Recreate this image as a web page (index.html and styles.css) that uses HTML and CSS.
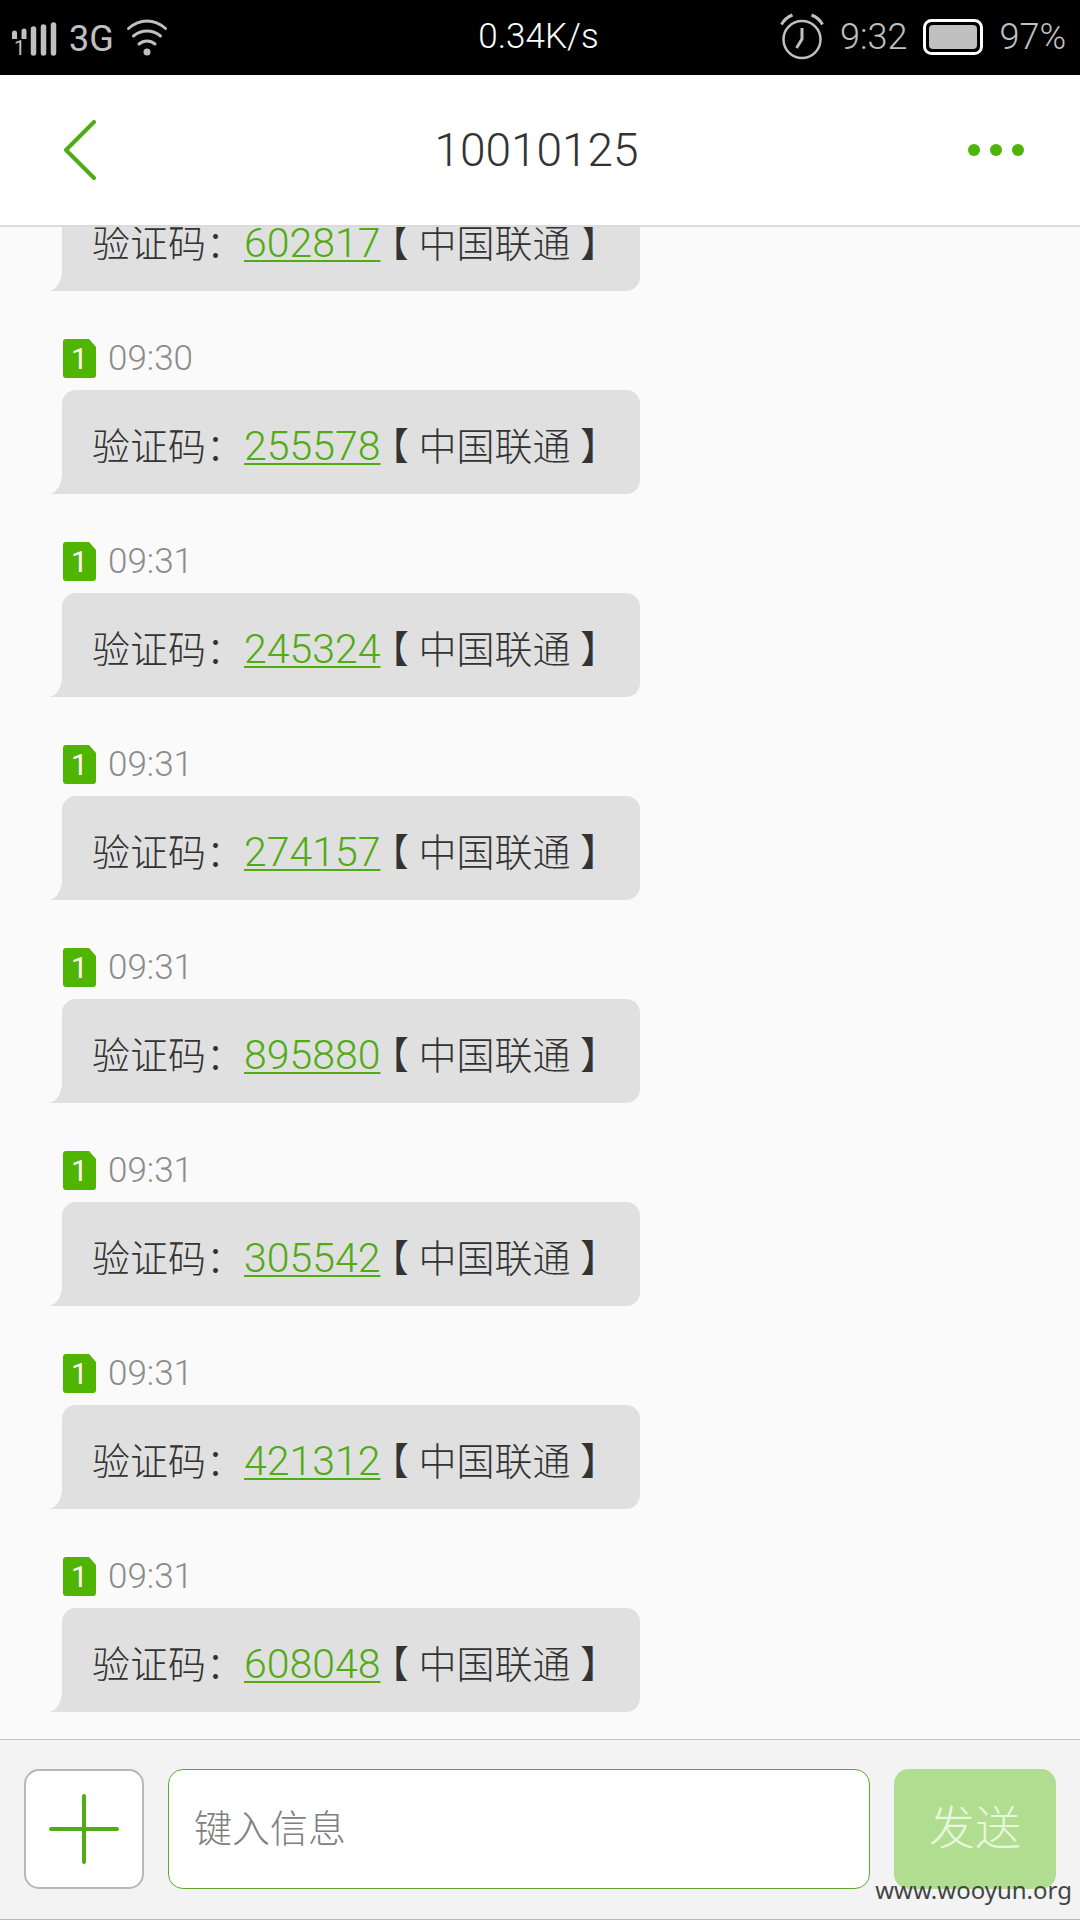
FILE: index.html
```html
<!DOCTYPE html>
<html lang="zh-CN">
<head>
<meta charset="utf-8">
<meta name="viewport" content="width=device-width, initial-scale=1">
<title>10010125</title>
<link rel="stylesheet" href="styles.css">
</head>
<body>
<div class="status">
  <div class="status-left">
    <svg class="signal" viewBox="0 0 46 44" aria-hidden="true">
      <path d="M1 22v-6q0-2.500 2.500-2.500T6 16v6zM10.500 22v-8q0-2.500 2.500-2.500t2.500 2.500v8z" fill="#c0c0c0"/>
      <path d="M22.500 12v24M32.500 10v26M42.500 8v28" stroke="#c0c0c0" stroke-width="5.500" stroke-linecap="round"/>
      <text x="3" y="38" class="signal-slot">1</text>
    </svg>
    <span class="network">3G</span>
    <svg class="wifi" viewBox="0 0 42 38" aria-hidden="true">
      <g fill="none" stroke="#c0c0c0" stroke-width="3" stroke-linecap="round">
        <path d="M2.500 10.500Q11 3 21 3t18.500 7.500M7.500 18Q13.500 13 21 13t13.500 5M13 26q3.500-3 8-3t8 3"/>
      </g>
      <circle cx="21" cy="34" r="3.500" fill="#c0c0c0"/>
    </svg>
  </div>
  <span class="speed">0.34K/s</span>
  <div class="status-right">
    <svg class="alarm" viewBox="0 0 44 48" aria-hidden="true">
      <g fill="none" stroke="#c0c0c0" stroke-width="2.500">
        <circle cx="22" cy="26.500" r="18.500"/>
        <path d="M1.500 11.500Q5 5 12.500 2M42.500 11.500Q39 5 31.500 2M22 15v11l-5.500 9" stroke-width="3"/>
      </g>
    </svg>
    <span>9:32</span>
    <svg class="battery" viewBox="0 0 60 36" aria-hidden="true">
      <rect x="1.500" y="1.500" width="57" height="33" rx="7" fill="none" stroke="#fff" stroke-width="3"/>
      <rect x="6" y="6" width="48" height="24" rx="4" fill="#c0c0c0"/>
    </svg>
    <span>97%</span>
  </div>
</div>

<header class="header">
  <button class="back-button" type="button" aria-label="返回">
    <svg class="back" viewBox="0 0 34 60" aria-hidden="true"><path d="M31 2L3 30l28 28" fill="none" stroke="#51ab14" stroke-width="4" stroke-linecap="round" stroke-linejoin="round"/></svg>
  </button>
  <h1 class="title">10010125</h1>
  <button class="more-button" type="button" aria-label="更多">
    <svg class="more" viewBox="0 0 56 12" aria-hidden="true"><g fill="#4fb505"><circle cx="6" cy="6" r="6"/><circle cx="28" cy="6" r="6"/><circle cx="50" cy="6" r="6"/></g></svg>
  </button>
</header>

<main class="thread">
  <ol class="messages">
    <li class="message">
      <p class="bubble">验证码：<a class="code" href="#">602817</a><span class="bracket">【</span>中国联通<span class="bracket">】</span></p>
    </li>
    <li class="message">
      <div class="meta"><span class="sim">1</span><time>09:30</time></div>
      <p class="bubble">验证码：<a class="code" href="#">255578</a><span class="bracket">【</span>中国联通<span class="bracket">】</span></p>
    </li>
    <li class="message">
      <div class="meta"><span class="sim">1</span><time>09:31</time></div>
      <p class="bubble">验证码：<a class="code" href="#">245324</a><span class="bracket">【</span>中国联通<span class="bracket">】</span></p>
    </li>
    <li class="message">
      <div class="meta"><span class="sim">1</span><time>09:31</time></div>
      <p class="bubble">验证码：<a class="code" href="#">274157</a><span class="bracket">【</span>中国联通<span class="bracket">】</span></p>
    </li>
    <li class="message">
      <div class="meta"><span class="sim">1</span><time>09:31</time></div>
      <p class="bubble">验证码：<a class="code" href="#">895880</a><span class="bracket">【</span>中国联通<span class="bracket">】</span></p>
    </li>
    <li class="message">
      <div class="meta"><span class="sim">1</span><time>09:31</time></div>
      <p class="bubble">验证码：<a class="code" href="#">305542</a><span class="bracket">【</span>中国联通<span class="bracket">】</span></p>
    </li>
    <li class="message">
      <div class="meta"><span class="sim">1</span><time>09:31</time></div>
      <p class="bubble">验证码：<a class="code" href="#">421312</a><span class="bracket">【</span>中国联通<span class="bracket">】</span></p>
    </li>
    <li class="message">
      <div class="meta"><span class="sim">1</span><time>09:31</time></div>
      <p class="bubble">验证码：<a class="code" href="#">608048</a><span class="bracket">【</span>中国联通<span class="bracket">】</span></p>
    </li>
  </ol>
</main>

<form class="compose">
  <button class="attach" type="button" aria-label="添加">
    <svg class="plus" viewBox="0 0 70 70" aria-hidden="true"><path d="M2 35h66M35 2v66" stroke="#51ab14" stroke-width="4" stroke-linecap="round"/></svg>
  </button>
  <input class="entry" type="text" placeholder="键入信息" aria-label="键入信息">
  <button class="send" type="button">发送</button>
</form>
<div class="watermark">www.wooyun.org</div>
</body>
</html>
```
FILE: styles.css
```css
* {
  box-sizing: border-box;
}

body {
  position: relative;
  display: flex;
  flex-direction: column;
  height: 100vh;
  margin: 0;
  overflow: hidden;
  background: #fafafa;
  color: #333;
  font-family: Roboto, "Noto Sans CJK SC", sans-serif;
  font-weight: 300;
}

svg {
  display: block;
  flex: none;
}

button {
  padding: 0;
  border: 0;
  background: none;
  font: inherit;
}

/* Status bar */
.status {
  display: grid;
  grid-template-columns: 1fr auto 1fr;
  align-items: center;
  flex: none;
  height: 75px;
  padding: 0 14px 1px 11px;
  background: #000;
  color: #c0c0c0;
  font-size: 36px;
  line-height: 40px;
}

.status-left,
.status-right {
  display: flex;
  align-items: center;
}

.status-right {
  justify-content: flex-end;
  gap: 16px;
}

.signal {
  width: 46px;
  height: 44px;
  margin-top: 4px;
}

.signal-slot {
  fill: #c0c0c0;
  font-size: 20px;
  font-weight: 400;
}

.network {
  margin: 4px 12px 0;
  font-weight: 400;
}

.wifi {
  width: 42px;
  height: 38px;
}

.speed {
  color: #fff;
  font-size: 35px;
}

.alarm {
  width: 44px;
  height: 48px;
}

.battery {
  width: 60px;
  height: 36px;
}

/* Title bar */
.header {
  display: flex;
  align-items: center;
  justify-content: space-between;
  flex: none;
  height: 152px;
  padding: 0 56px 0 63px;
  border-bottom: 2px solid #dadcdb;
  background: #fff;
}

.back-button {
  width: 42px;
}

.more-button {
  width: 56px;
}

.title {
  margin: 0;
  font-size: 46px;
  font-weight: 300;
  line-height: 56px;
}

.back {
  width: 34px;
  height: 60px;
}

.more {
  width: 56px;
  height: 12px;
}

/* Messages, newest at the bottom */
.thread {
  display: flex;
  flex-direction: column;
  justify-content: flex-end;
  flex: 1;
  min-height: 0;
  padding: 0 62px 27px;
  overflow: hidden;
}

.messages {
  display: flex;
  flex-direction: column;
  gap: 48px;
  margin: 0;
  padding: 0;
  list-style: none;
}

.message {
  display: flex;
  flex-direction: column;
  align-items: flex-start;
  gap: 12px;
}

.meta {
  display: flex;
  align-items: center;
  gap: 12px;
  height: 39px;
  padding-left: 1px;
  color: #8c8c8c;
  font-size: 35px;
  line-height: 39px;
}

.sim {
  width: 33px;
  border-radius: 3px;
  background: #4fb500;
  clip-path: polygon(0 0, 26px 0, 33px 8px, 33px 100%, 0 100%);
  color: #fff;
  font-size: 30px;
  font-weight: 400;
  text-align: center;
}

.bubble {
  position: relative;
  margin: 0;
  padding: 29px 32px 19px 30px;
  border-radius: 14px 14px 14px 0;
  background: #e0e0e0;
  font-size: 38px;
  line-height: 56px;
}

.bubble::before {
  content: "";
  position: absolute;
  bottom: 0;
  left: -14px;
  width: 14px;
  height: 20px;
  background: radial-gradient(ellipse 14px 20px at 0 0, transparent 98%, #e0e0e0 100%);
}

.code {
  color: #51ab14;
  font-size: 41px;
  line-height: 41px;
  text-decoration-thickness: 2px;
  text-underline-offset: 3px;
}

/* Half-width bracket centred in a full-width cell */
.bracket {
  display: inline-block;
  width: 38px;
  font-feature-settings: "halt";
  text-align: center;
}

/* Compose bar */
.compose {
  display: flex;
  gap: 24px;
  flex: none;
  padding: 29px 24px 30px;
  border-top: 1px solid #c4c4c4;
  border-bottom: 1px solid #b8b8b8;
  background: #f3f3f3;
}

.attach,
.entry,
.send {
  height: 120px;
  border-radius: 15px;
}

.attach {
  display: flex;
  align-items: center;
  justify-content: center;
  width: 120px;
  border: 2px solid #b8b8b8;
  background: #fff;
}

.plus {
  width: 70px;
  height: 70px;
}

.entry {
  flex: 1;
  min-width: 0;
  padding: 0 25px;
  border: 1px solid #5fa82e;
  background: #fff;
  color: #333;
  font: inherit;
  font-size: 38px;
}

.entry::placeholder {
  color: #808080;
}

.send {
  width: 162px;
  padding-bottom: 10px;
  background: #b1dd90;
  color: #e8f8dc;
  font-size: 46px;
}

.watermark {
  position: absolute;
  right: 8px;
  bottom: 12px;
  color: #444;
  font: 400 24px/36px "Noto Sans", sans-serif;
}
```
